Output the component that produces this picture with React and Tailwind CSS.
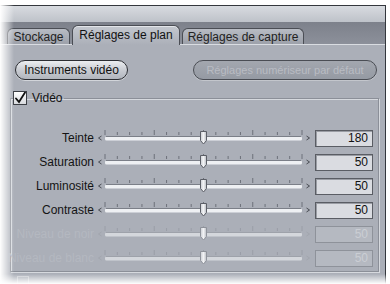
import React from "react";

const rows = [
  { label: "Teinte", value: "180", enabled: true },
  { label: "Saturation", value: "50", enabled: true },
  { label: "Luminosité", value: "50", enabled: true },
  { label: "Contraste", value: "50", enabled: true },
  { label: "Niveau de noir", value: "50", enabled: false },
  { label: "Niveau de blanc", value: "50", enabled: false },
];

const ticks = Array.from({ length: 17 }, (_, i) => i);

const Slider = ({ enabled }) => {
  const tickColor = enabled ? "#6d717a" : "#9a9ea7";
  const arrow = enabled ? "#4a4d54" : "#a2a6ae";
  return (
    <svg width="215" height="24" viewBox="0 0 215 24" className="shrink-0">
      {/* small end arrows */}
      <path d="M4.5 10 L1.5 12 L4.5 14" fill="none" stroke={arrow} strokeWidth="1" />
      <path d="M209.5 10 L212.5 12 L209.5 14" fill="none" stroke={arrow} strokeWidth="1" />
      {ticks.map((i) => {
        const x = 8 + (197 * i) / 16;
        const tall = i % 4 === 0;
        return (
          <line
            key={i}
            x1={x}
            x2={x}
            y1={tall ? 4 : 6}
            y2={9}
            stroke={tickColor}
            strokeWidth="1"
          />
        );
      })}
      {/* track */}
      <rect x="8" y="10.5" width="197" height="4" rx="1.5" fill={enabled ? "#eef0f3" : "#d4d7dc"} />
      <line x1="9" x2="204" y1="10.5" y2="10.5" stroke={enabled ? "#7b7f88" : "#9ea2aa"} strokeWidth="1" />
      {/* thumb */}
      <defs>
        <linearGradient id="thumbGrad" x1="0" x2="1" y1="0" y2="0">
          <stop offset="0" stopColor="#c9ccd2" />
          <stop offset="0.5" stopColor="#f2f3f5" />
          <stop offset="1" stopColor="#b9bcc3" />
        </linearGradient>
      </defs>
      <path
        d="M103.5 5.5 h6 v9 l-3 3.5 l-3 -3.5 z"
        fill="url(#thumbGrad)"
        stroke={enabled ? "#5b5e66" : "#8e929a"}
        strokeWidth="1"
        strokeLinejoin="round"
      />
    </svg>
  );
};

const SliderRow = ({ label, value, enabled }) => (
  <div className="flex h-[24px] items-center">
    <div
      className={`flex w-[84px] justify-end whitespace-nowrap pr-[1px] text-[12px] leading-none ${
        enabled ? "text-[#141414]" : "text-[#b4b8c0]"
      }`}
    >
      {label}
    </div>
    <div className="ml-[2px]">
      <Slider enabled={enabled} />
    </div>
    <div
      className={`ml-[3px] flex h-[17px] w-[58px] items-center justify-end border pr-[4px] text-[12px] leading-none ${
        enabled
          ? "border-[#5a5d64] bg-[#dadce1] text-[#111] shadow-[inset_1px_1px_0_#9a9da4]"
          : "border-[#8e929a] bg-[#b5b9c1] text-[#cbced4]"
      }`}
    >
      {value}
    </div>
  </div>
);

export default function App() {
  return (
    <div
      className="relative h-[284px] w-[390px] overflow-hidden bg-white pt-[5px]"
      style={{ fontFamily: '"Liberation Sans", Arial, sans-serif' }}
    >
      <div className="h-[279px] w-[386px] border-r border-t border-[#34373d] bg-[#abafb8]">
        {/* title strip */}
        <div className="h-[16px] bg-gradient-to-b from-[#d8dbe0] to-[#bec2c9]" />

        {/* tabs */}
        <div className="flex h-[22px] items-end gap-[2px] bg-gradient-to-b from-[#7d818b] to-[#8c909a] pl-[7px]">
          <div className="flex h-[16px] w-[63px] items-center justify-center rounded-t-[6px] border border-b-0 border-[#4b4e55] bg-gradient-to-b from-[#b8bcc4] to-[#9da1aa] text-[12px] leading-none text-[#222]">
            Stockage
          </div>
          <div className="relative -mb-px flex h-[20px] w-[108px] items-center justify-center rounded-t-[6px] border border-b-0 border-[#4b4e55] bg-gradient-to-b from-[#c4c8cf] to-[#abafb8] pb-[1px] text-[12px] leading-none text-[#111] shadow-[inset_0_1px_0_#e4e6ea]">
            Réglages de plan
          </div>
          <div className="flex h-[16px] w-[122px] items-center justify-center rounded-t-[6px] border border-b-0 border-[#4b4e55] bg-gradient-to-b from-[#b8bcc4] to-[#9da1aa] text-[12px] leading-none text-[#222]">
            Réglages de capture
          </div>
        </div>

        {/* content */}
        <div className="border-t border-[#d9dce1] pt-[15px]">
          <div className="flex h-[20px] items-center">
            <button className="ml-[15px] flex h-[20px] w-[113px] items-center justify-center rounded-full border border-[#2c2e33] bg-gradient-to-b from-[#eceef1] via-[#c9ccd2] to-[#b1b5bd] text-[12px] leading-none text-[#111] shadow-[0_1px_0_#d2d5da]">
              Instruments vidéo
            </button>
            <button className="ml-[65px] flex h-[20px] w-[184px] items-center justify-center whitespace-nowrap rounded-full border border-[#4a4d54] bg-gradient-to-b from-[#a3a7af] to-[#959aa3] text-[11px] leading-none text-[#b9bcc3] shadow-[0_1px_0_#c3c6cc]">
              Réglages numériseur par défaut
            </button>
          </div>

          <fieldset className="ml-[10px] mt-[10px] h-[182px] w-[369px] border border-[#8b8f98] shadow-[inset_1px_1px_0_#d6d9de,1px_1px_0_#d6d9de]">
            <legend className="ml-[2px] flex h-[16px] items-center pr-[2px]">
              <span className="flex h-[14px] w-[14px] items-center justify-center border border-[#3b3e44] bg-gradient-to-b from-[#ffffff] to-[#d8dade]">
                <svg width="12" height="12" viewBox="0 0 12 12">
                  <path
                    d="M2 6.5 L5 10 L11 0.5"
                    fill="none"
                    stroke="#111"
                    strokeWidth="1.8"
                    strokeLinecap="round"
                  />
                </svg>
              </span>
              <span className="ml-[5px] text-[12px] leading-none text-[#111]">Vidéo</span>
            </legend>
            <div className="pt-[20px]">
              {rows.map((r) => (
                <SliderRow key={r.label} {...r} />
              ))}
            </div>
          </fieldset>

          <div className="ml-[17px] mt-[4px] h-[12px] w-[12px] border border-[#c9ccd1]" />
        </div>
      </div>

      {/* soft fade at the picture's left and bottom edges */}
      <div className="pointer-events-none absolute left-0 top-0 h-full w-[14px] bg-gradient-to-r from-white to-transparent" />
      <div className="pointer-events-none absolute bottom-0 left-0 h-[10px] w-full bg-gradient-to-b from-transparent to-white" />
    </div>
  );
}
